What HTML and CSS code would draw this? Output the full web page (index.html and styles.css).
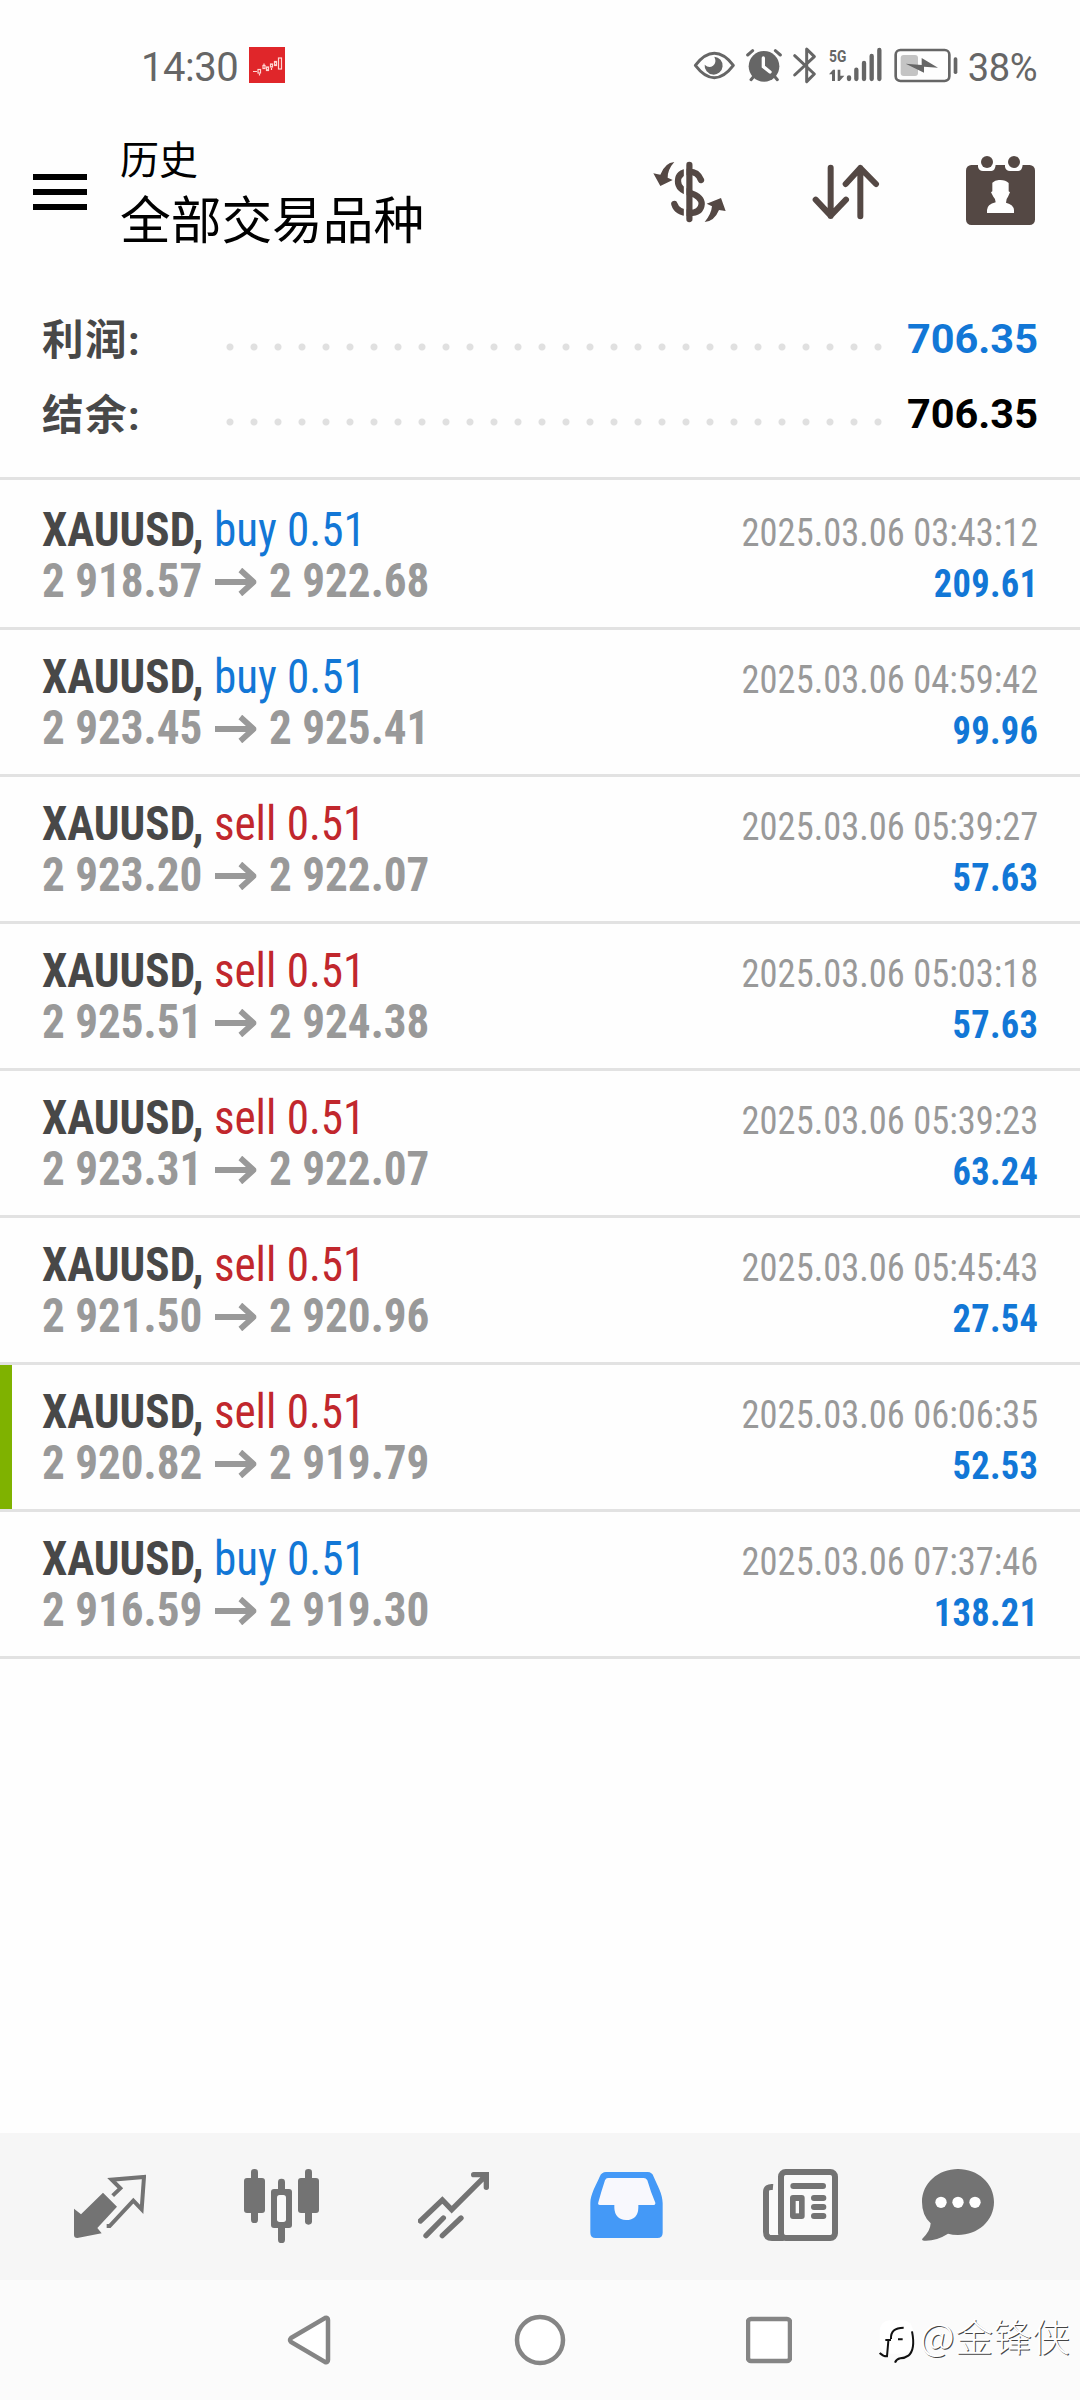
FILE: index.html
```html
<!DOCTYPE html>
<html lang="zh-CN">
<head>
<meta charset="utf-8">
<title>历史</title>
<link rel="stylesheet" href="styles.css">
</head>
<body>
<div class="screen">
  <div class="status">
    <span class="clock">14:30</span>
    <svg class="app-badge" viewBox="0 0 36 36" width="36" height="36">
      <rect width="36" height="36" fill="#e0262a"/>
      <g fill="none" stroke="#ffd6d2" stroke-width="1.2">
        <path d="M4 24.5h4M10.500 26.500v2M15 16.500v2M22.500 21v2"/>
        <rect x="9" y="22.500" width="2.500" height="3.500"/><rect x="14" y="18.500" width="2" height="3"/>
        <rect x="17.500" y="20" width="2" height="3.500"/><rect x="21.500" y="17" width="2" height="3"/>
        <rect x="25.500" y="14.500" width="2" height="4"/><rect x="29.500" y="11" width="3" height="11"/>
      </g>
    </svg>
    <svg class="sys" viewBox="160 45 800 120" width="266.700" height="40">
      <g fill="none" stroke="#666" stroke-width="9">
        <path d="M167 106Q195 70 224 70T281 106Q253 143 224 143T167 106Z" stroke-linejoin="round"/>
        <path d="M465 77L524 132L501 155V57L524 80L465 135" stroke-linejoin="round" stroke-linecap="round"/>
        <rect x="768" y="60" width="161" height="93" rx="14" stroke-width="8"/>
      </g>
      <path d="M224 80a27 27 0 1 1-29 24q13 12 25 3t4-27z" fill="#666"/>
      <circle cx="373" cy="109" r="46" fill="#666"/>
      <g stroke="#666" stroke-width="9" stroke-linecap="round"><path d="M324 75l15-13M422 75l-15-13M334 149l10-12M413 149l-10-12"/></g>
      <path d="M371 84v26l20 16" fill="none" stroke="#fff" stroke-width="10" stroke-linecap="round"/>
      <text x="568" y="97" class="net" textLength="52" lengthAdjust="spacingAndGlyphs">5G</text>
      <path d="M568 133l12-14h6v34h-9v-20zM594 119h8v18h12l-14 16h-6z" fill="#666"/>
      <g stroke="#666" stroke-width="13" stroke-linecap="round"><path d="M628 142v5M650 119v28M673 99v48M696 78v69M719 60v87"/></g>
      <rect x="783" y="75" width="52" height="63" rx="9" fill="#c4c4c4"/>
      <path d="M798 101l48 4V84l49 29-42-3v18z" fill="#666"/>
      <rect x="942" y="82" width="11" height="50" rx="5" fill="#666"/>
    </svg>
    <span class="charge">38%</span>
  </div>

  <header class="bar">
    <svg class="menu" viewBox="0 0 54 36" width="54" height="36"><path d="M0 3h54M0 18h54M0 33h54" stroke="#000" stroke-width="6"/></svg>
    <div class="titles"><div class="t1">历史</div><div class="t2">全部交易品种</div></div>
    <svg class="i-dollar" viewBox="40 375 222 213" width="74" height="71">
      <g fill="none" stroke="#544844" stroke-width="19" stroke-linecap="round">
        <path d="M149 405v162"/>
        <path d="M184 450Q174 425 149 425Q115 426 115 454Q115 480 152 489Q186 500 186 522Q184 549 149 549Q112 548 104 522"/>
      </g>
      <path d="M136 392v190" stroke="#fff" stroke-width="7"/>
      <path d="M104 396Q76 398 62 434L41 430L62 468L99 450L84 443Q84 418 104 396ZM195 576Q224 574 238 540L258 543L244 504L201 521L217 529Q215 552 195 576Z" fill="#544844"/>
    </svg>
    <svg class="i-sort" viewBox="517 375 204 213" width="68" height="71">
      <path d="M573 413V558M528 509L573 557L619 509M662 559V414M618 462L662 414L709 462" fill="none" stroke="#544844" stroke-width="18" stroke-linecap="round" stroke-linejoin="round"/>
    </svg>
    <svg class="i-cal" viewBox="978 375 207 213" width="69" height="71">
      <rect x="978" y="405" width="207" height="180" rx="16" fill="#544844"/>
      <path d="M1014 404V411Q1017 423 1029 423H1054Q1066 421 1067 404ZM1095 404V411Q1098 423 1110 423H1135Q1147 421 1148 404Z" fill="#fff"/>
      <circle cx="1041" cy="396" r="18" fill="#544844"/><circle cx="1122" cy="396" r="18" fill="#544844"/>
      <path d="M1057 458Q1067 448 1081 450Q1097 450 1106 459V484L1110 487L1104 500Q1098 506 1098 518Q1121 524 1122 540V549H1041V540Q1041 524 1067 517Q1067 506 1060 500L1053 487L1057 484Z" fill="#fff"/>
    </svg>
  </header>

  <section class="summary">
    <div class="sum"><span class="label">利润:</span><i class="dots"></i><b class="blue">706.35</b></div>
    <div class="sum"><span class="label">结余:</span><i class="dots"></i><b>706.35</b></div>
  </section>

  <main class="deals">
    <div class="deal"><div class="left"><p><b>XAUUSD,</b> <span class="blue">buy 0.51</span></p><p class="price">2 918.57<svg class="arr" viewBox="0 0 44 28"><path d="M0 14h41M27 2l14 12L27 26"/></svg>2 922.68</p></div><div class="right"><p>2025.03.06 03:43:12</p><p class="gain">209.61</p></div></div>
    <div class="deal"><div class="left"><p><b>XAUUSD,</b> <span class="blue">buy 0.51</span></p><p class="price">2 923.45<svg class="arr" viewBox="0 0 44 28"><path d="M0 14h41M27 2l14 12L27 26"/></svg>2 925.41</p></div><div class="right"><p>2025.03.06 04:59:42</p><p class="gain">99.96</p></div></div>
    <div class="deal"><div class="left"><p><b>XAUUSD,</b> <span class="red">sell 0.51</span></p><p class="price">2 923.20<svg class="arr" viewBox="0 0 44 28"><path d="M0 14h41M27 2l14 12L27 26"/></svg>2 922.07</p></div><div class="right"><p>2025.03.06 05:39:27</p><p class="gain">57.63</p></div></div>
    <div class="deal"><div class="left"><p><b>XAUUSD,</b> <span class="red">sell 0.51</span></p><p class="price">2 925.51<svg class="arr" viewBox="0 0 44 28"><path d="M0 14h41M27 2l14 12L27 26"/></svg>2 924.38</p></div><div class="right"><p>2025.03.06 05:03:18</p><p class="gain">57.63</p></div></div>
    <div class="deal"><div class="left"><p><b>XAUUSD,</b> <span class="red">sell 0.51</span></p><p class="price">2 923.31<svg class="arr" viewBox="0 0 44 28"><path d="M0 14h41M27 2l14 12L27 26"/></svg>2 922.07</p></div><div class="right"><p>2025.03.06 05:39:23</p><p class="gain">63.24</p></div></div>
    <div class="deal"><div class="left"><p><b>XAUUSD,</b> <span class="red">sell 0.51</span></p><p class="price">2 921.50<svg class="arr" viewBox="0 0 44 28"><path d="M0 14h41M27 2l14 12L27 26"/></svg>2 920.96</p></div><div class="right"><p>2025.03.06 05:45:43</p><p class="gain">27.54</p></div></div>
    <div class="deal marked"><div class="left"><p><b>XAUUSD,</b> <span class="red">sell 0.51</span></p><p class="price">2 920.82<svg class="arr" viewBox="0 0 44 28"><path d="M0 14h41M27 2l14 12L27 26"/></svg>2 919.79</p></div><div class="right"><p>2025.03.06 06:06:35</p><p class="gain">52.53</p></div></div>
    <div class="deal"><div class="left"><p><b>XAUUSD,</b> <span class="blue">buy 0.51</span></p><p class="price">2 916.59<svg class="arr" viewBox="0 0 44 28"><path d="M0 14h41M27 2l14 12L27 26"/></svg>2 919.30</p></div><div class="right"><p>2025.03.06 07:37:46</p><p class="gain">138.21</p></div></div>
  </main>

  <nav class="tabs">
    <svg viewBox="42 57 216 222" width="72" height="74">
      <path d="M129 128L171 170L112 234L125 250L52 264Q42 264 42 255V176L63 193Z" fill="#737373"/>
      <path d="M158 137L181 115L155 89L252 81L245 178L220 152L149 228H140" fill="none" stroke="#737373" stroke-width="12"/>
    </svg>
    <svg viewBox="552 57 225 222" width="75" height="74">
      <g fill="#737373"><rect x="573" y="57" width="21" height="162" rx="10"/><rect x="552" y="84" width="63" height="105" rx="9"/><rect x="735" y="57" width="21" height="167" rx="10"/><rect x="714" y="84" width="63" height="105" rx="9"/><rect x="654" y="86" width="21" height="193" rx="10"/><rect x="633" y="117" width="63" height="117" rx="9"/></g>
      <rect x="651" y="135" width="27" height="81" rx="8" fill="#fafafa"/>
    </svg>
    <svg viewBox="1074 57 213 222" width="71" height="74">
      <path d="M1081 213L1147 150L1175 179L1278 76M1241 74H1279V112M1098 257L1150 204M1147 257L1203 204" fill="none" stroke="#737373" stroke-width="16" stroke-linecap="round"/>
    </svg>
    <svg viewBox="60 57 219 222" width="73" height="74">
      <path d="M61 159C61 133 78 105 89 80Q95 66 108 66H233Q246 66 251 80C261 104 278 131 278 160V248Q278 264 262 264H77Q61 264 61 248Z" fill="#4499f7"/>
      <path d="M114 84H221Q228 84 232 91Q242 126 256 158Q257 165 249 165H205V173Q204 210 168 210Q134 207 133 173V165H90Q82 165 85 157Q94 124 105 91Q108 84 114 84Z" fill="#f8f8fd"/>
    </svg>
    <svg viewBox="578 57 225 222" width="75" height="74">
      <path d="M608 111Q587 109 587 126V245Q587 264 605 264H640" fill="none" stroke="#737373" stroke-width="18"/>
      <path d="M596 130Q597 120 609 120H623V255H605Q596 255 596 245Z" fill="#fafafa"/>
      <rect x="632" y="66" width="162" height="198" rx="14" fill="#fafafa" stroke="#737373" stroke-width="18"/>
      <path d="M669 108H758M731 144H759M731 171H759M731 198H759" stroke="#737373" stroke-width="18" stroke-linecap="round"/>
      <rect x="659" y="135" width="44" height="72" rx="9" fill="#737373"/><rect x="676" y="153" width="10" height="37" fill="#fafafa"/>
    </svg>
    <svg viewBox="1056 57 216 222" width="72" height="74">
      <path d="M1164 57C1223 57 1272 99 1272 156S1223 255 1164 255Q1147 255 1134 251Q1098 274 1062 272Q1054 271 1057 266Q1081 244 1082 220Q1056 197 1056 156C1056 99 1105 57 1164 57Z" fill="#737373"/>
      <g fill="#fff"><circle cx="1113" cy="157" r="17"/><circle cx="1164" cy="157" r="17"/><circle cx="1215" cy="157" r="17"/></g>
    </svg>
  </nav>

  <footer class="sysnav">
    <svg viewBox="0 0 44 52" width="44" height="52"><path d="M4 24L38 4Q41 3 41 6V46Q41 49 38 48L4 28Q2 26 4 24Z"/></svg>
    <svg viewBox="0 0 52 52" width="52" height="52"><circle cx="26" cy="26" r="23"/></svg>
    <svg viewBox="0 0 46 52" width="46" height="52"><rect x="2" y="5" width="42" height="42" rx="3"/></svg>
    <div class="mark">
      <svg viewBox="55 55 126 150" width="42" height="50">
        <rect x="60" y="62" width="100" height="100" rx="30" fill="#fff"/>
        <path class="ink" d="M94 118Q92 84 132 84M77 121H94M115 119H129M86 124L82 170Q70 170 60 160M157 95Q168 150 146 168Q135 176 122 176Q110 178 106 189"/>
      </svg>
      <span>@金锋侠</span>
    </div>
  </footer>
</div>
</body>
</html>
```
FILE: styles.css
```css
* { box-sizing: border-box; }
body { margin: 0; background: #fefefe; font-family: Roboto, "Noto Sans CJK SC", sans-serif; }
p { margin: 0; }
svg { display: block; flex: none; }
.screen { width: 1080px; height: 2400px; display: flex; flex-direction: column; overflow: hidden; }
.blue { color: #1277d6; }
.red { color: #c1272d; }

.status { height: 90px; padding: 45px 0 0 141px; display: flex; align-items: flex-start; color: #666; }
.clock { width: 108px; font-size: 40px; line-height: 46px; letter-spacing: -0.5px; }
.app-badge { margin-top: 2px; }
.sys { margin-left: 408px; }
.net { font: 700 48px Roboto, sans-serif; fill: #666; }
.charge { margin-left: 8px; font-size: 38px; line-height: 46px; letter-spacing: -0.3px; }

.bar { height: 210px; padding-left: 33px; display: flex; align-items: flex-start; }
.menu { margin-top: 84px; }
.titles { width: 332px; margin-left: 33px; padding-top: 47px; color: #000; white-space: nowrap; }
.t1 { font-size: 39px; line-height: 49px; }
.t2 { font-size: 50.700px; line-height: 72px; }
.i-dollar { margin: 65px 0 0 201px; }
.i-sort { margin: 65px 0 0 85px; }
.i-cal { margin: 65px 0 0 86px; }

.summary { height: 180px; padding: 1px 42px 0 42px; border-bottom: 3px solid #e2e2e2; }
.sum { height: 75px; display: flex; align-items: center; font-size: 41.500px; }
.label { width: 176px; padding-bottom: 3px; color: #484848; font-weight: 700; letter-spacing: 1.500px; }
.dots { width: 672px; height: 24px; margin: 16px 0 0; background: radial-gradient(circle, #e0e0e0 3px, transparent 4px) 0 0 / 24px 24px; }
.sum b { flex: 1; text-align: right; line-height: 77px; }

.deals { padding-top: 3px; flex: 1; }
.deal { height: 147px; padding: 21px 42px 0; display: flex; justify-content: space-between; border-bottom: 3px solid #e2e2e2; font-stretch: 75%; line-height: 51px; white-space: nowrap; }
.left { font-size: 48px; transform: scaleX(0.94); transform-origin: left; }
.left b { color: #484848; }
.price { display: flex; align-items: center; color: #999; font-weight: 700; }
.arr { width: 44px; height: 28px; margin: 2px 14px 0 13px; fill: none; stroke: #999; stroke-width: 6; }
.right { padding-top: 4px; font-size: 39px; text-align: right; color: #999; transform: scaleX(0.935); transform-origin: right; }
.gain { color: #1277d6; font-weight: 700; letter-spacing: 0.300px; }
.marked { background: linear-gradient(#7fb200, #7fb200) 0 0 / 12px 100% no-repeat; }

.tabs { height: 147px; padding: 36px 0 0 74px; background: #f6f6f6; display: grid; grid-template-columns: 170px 174px 172px 173px 159px 72px; align-items: start; }
.sysnav { height: 120px; padding: 34px 0 0 287px; background: #fbfbfb; display: flex; align-items: flex-start; }
.sysnav > svg { fill: #fff; stroke: #858585; stroke-width: 4.500; }
.sysnav > svg:nth-child(2) { margin-left: 183px; }
.sysnav > svg:nth-child(3) { margin-left: 180px; }
.mark { display: flex; margin: -6px 0 0 86px; color: #fff; font: 300 38px/54px "Noto Sans CJK SC", sans-serif; letter-spacing: 0.500px; text-shadow: 1px 1px 0 #444; white-space: nowrap; }
.mark svg { margin-top: 10px; }
.ink { fill: none; stroke: #111; stroke-width: 6; }
```
